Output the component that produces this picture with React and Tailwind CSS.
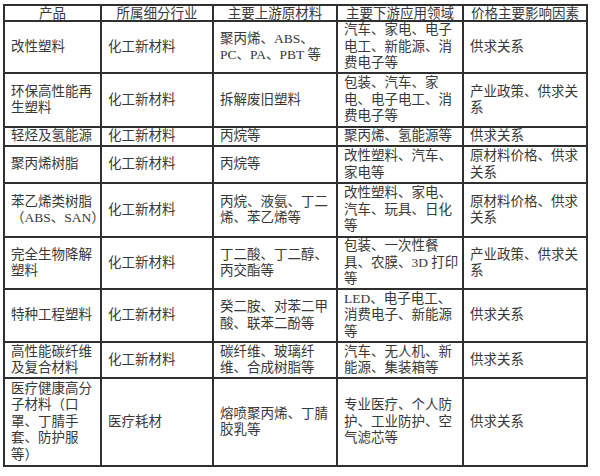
import React from 'react'

const header = ['产品', '所属细分行业', '主要上游原材料', '主要下游应用领域', '价格主要影响因素']

const rows = [
  {
    h: 'h-[52px]',
    cells: [['改性塑料'], ['化工新材料'], ['聚丙烯、ABS、', 'PC、PA、PBT 等'], ['汽车、家电、电子', '电工、新能源、消', '费电子等'], ['供求关系']],
  },
  {
    h: 'h-[54px]',
    cells: [['环保高性能再', '生塑料'], ['化工新材料'], ['拆解废旧塑料'], ['包装、汽车、家', '电、电子电工、消', '费电子等'], ['产业政策、供求关', '系']],
  },
  {
    h: 'h-[19px]',
    cells: [['轻烃及氢能源'], ['化工新材料'], ['丙烷等'], ['聚丙烯、氢能源等'], ['供求关系']],
  },
  {
    h: 'h-[37px]',
    cells: [['聚丙烯树脂'], ['化工新材料'], ['丙烷等'], ['改性塑料、汽车、', '家电等'], ['原材料价格、供求', '关系']],
  },
  {
    h: 'h-[54px]',
    cells: [['苯乙烯类树脂', '（ABS、SAN）'], ['化工新材料'], ['丙烷、液氨、丁二', '烯、苯乙烯等'], ['改性塑料、家电、', '汽车、玩具、日化', '等'], ['原材料价格、供求', '关系']],
  },
  {
    h: 'h-[52px]',
    cells: [['完全生物降解', '塑料'], ['化工新材料'], ['丁二酸、丁二醇、', '丙交酯等'], ['包装、一次性餐', '具、农膜、3D 打印', '等'], ['产业政策、供求关', '系']],
  },
  {
    h: 'h-[53px]',
    cells: [['特种工程塑料'], ['化工新材料'], ['癸二胺、对苯二甲', '酸、联苯二酚等'], ['LED、电子电工、', '消费电子、新能源', '等'], ['供求关系']],
  },
  {
    h: 'h-[36px]',
    cells: [['高性能碳纤维', '及复合材料'], ['化工新材料'], ['碳纤维、玻璃纤', '维、合成树脂等'], ['汽车、无人机、新', '能源、集装箱等'], ['供求关系']],
  },
  {
    h: 'h-[88px]',
    cells: [['医疗健康高分', '子材料（口', '罩、丁腈手', '套、防护服', '等）'], ['医疗耗材'], ['熔喷聚丙烯、丁腈', '胶乳等'], ['专业医疗、个人防', '护、工业防护、空', '气滤芯等'], ['供求关系']],
  },
]

export default function App() {
  return (
    <div
      className="w-[600px] h-[476px] bg-white overflow-hidden pt-[4px] text-[#383838]"
      style={{ fontFamily: '"Liberation Serif", "Noto Sans CJK SC", serif' }}
    >
      <table className="ml-[3px] w-[585px] table-fixed border-collapse border-2 border-[#303030] text-[13.5px] leading-[16.5px]">
        <colgroup>
          <col className="w-[97px]" />
          <col className="w-[112px]" />
          <col className="w-[124px]" />
          <col className="w-[126px]" />
          <col className="w-[124px]" />
        </colgroup>
        <thead>
          <tr className="h-[16px]">
            {header.map((t, i) => (
              <th key={i} className="border-2 border-[#303030] p-0 text-center font-normal leading-[13px] whitespace-nowrap">
                {t}
              </th>
            ))}
          </tr>
        </thead>
        <tbody>
          {rows.map((row, ri) => (
            <tr key={ri} className={row.h}>
              {row.cells.map((lines, ci) => (
                <td key={ci} className="border-2 border-[#303030] py-0 pl-[6px] pr-0 align-middle whitespace-nowrap">
                  {lines.map((l, li) => (
                    <div key={li}>{l}</div>
                  ))}
                </td>
              ))}
            </tr>
          ))}
        </tbody>
      </table>
    </div>
  )
}
